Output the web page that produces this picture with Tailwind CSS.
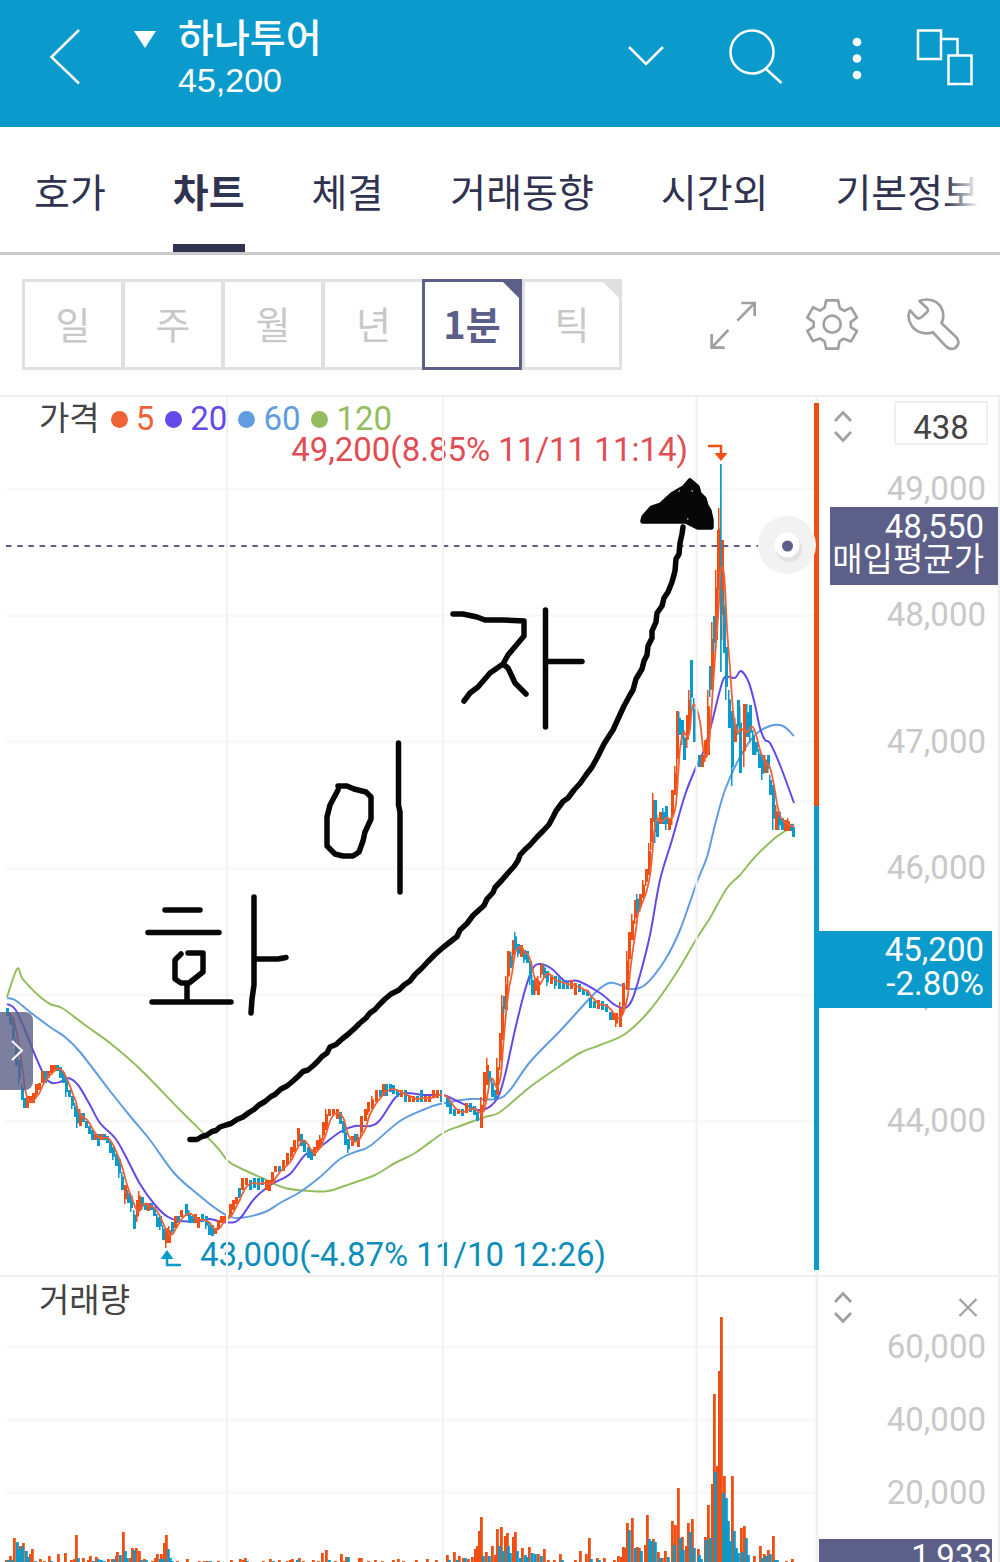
<!DOCTYPE html>
<html lang="ko">
<head>
  <meta charset="UTF-8" />
  <meta name="viewport" content="width=device-width, initial-scale=1.0" />
  <title>하나투어 차트</title>
  <script src="https://cdn.jsdelivr.net/npm/@tailwindcss/browser@4"></script>
</head>
<body class="bg-white font-['Roboto','Noto_Sans_CJK_KR',sans-serif] text-[#444]">

  <!-- 상단 종목 바 -->
  <header class="flex h-[127px] items-start bg-[#0a9acb] pr-[26px] pl-[49px] text-white">
    <button type="button" aria-label="뒤로" class="mt-7">
      <svg class="h-[58px] w-8" viewBox="0 0 32 58" fill="none" stroke="currentColor" stroke-width="2.5"><path d="M30 2 2.500 29 30 55.500" /></svg>
    </button>
    <button type="button" aria-label="종목 목록" class="mt-[30px] ml-[52px]">
      <svg class="h-[18px] w-6" viewBox="0 0 24 18" fill="currentColor"><path d="M1 1h22L12 18z" /></svg>
    </button>
    <div class="mt-[10px] ml-[21px]">
      <h1 class="font-['Noto_Sans_CJK_KR',sans-serif] text-[39px] leading-[50px] font-medium">하나투어</h1>
      <p class="mt-[2px] font-['Liberation_Sans',sans-serif] text-[34px] leading-9">45,200</p>
    </div>
    <div class="mt-7 ml-auto flex items-center">
      <button type="button" aria-label="펼치기">
        <svg class="h-[58px] w-[38px]" viewBox="0 0 38 58" fill="none" stroke="currentColor" stroke-width="2.500"><path d="M2 19l17 17 17-17" /></svg>
      </button>
      <button type="button" aria-label="검색" class="ml-[63px]">
        <svg class="h-[58px] w-[56px]" viewBox="0 0 56 58" fill="none" stroke="currentColor" stroke-width="2.500"><circle cx="24" cy="24" r="21.500" /><path d="M37.500 40.500 53.500 55" /></svg>
      </button>
      <button type="button" aria-label="더보기" class="ml-[67px]">
        <svg class="h-[58px] w-3" viewBox="0 0 12 58" fill="currentColor"><circle cx="6" cy="14" r="4.300" /><circle cx="6" cy="30.500" r="4.300" /><circle cx="6" cy="47" r="4.300" /></svg>
      </button>
      <button type="button" aria-label="화면 연결" class="ml-[53px]">
        <svg class="h-[58px] w-[58px]" viewBox="0 0 58 58" fill="none" stroke="currentColor" stroke-width="2.500"><path d="M2 2.500h23v28.500H2zM25 11h16.500v16.500M32.500 27.500h23v28.500h-23z" /></svg>
      </button>
    </div>
  </header>

  <!-- 탭 메뉴 -->
  <nav class="relative flex h-32 gap-[67px] overflow-hidden border-b-3 border-[#c9c9c9] pl-[34px] font-['Noto_Sans_CJK_KR',sans-serif] text-[39px] leading-[126px] whitespace-nowrap text-[#303350]">
    <a href="#">호가</a>
    <a href="#" aria-current="page" class="border-b-8 border-[#303350] font-bold">차트</a>
    <a href="#">체결</a>
    <a href="#">거래동향</a>
    <a href="#">시간외</a>
    <a href="#">기본정보</a>
    <span class="absolute inset-y-0 right-0 w-[54px] bg-linear-to-r from-white/0 to-white to-60%"></span>
  </nav>

  <!-- 주기 선택, 도구 -->
  <section class="flex h-[140px] items-start pt-6 pr-[39px] pl-[22px]">
    <div class="flex h-[91px] font-['Noto_Sans_CJK_KR',sans-serif] text-[38px] leading-[82px] text-[#c8c8c8]">
      <button type="button" class="-mr-[2px] flex w-[102px] justify-center border-3 border-[#e0e0e0]">일</button>
      <button type="button" class="-mr-[2px] flex w-[102px] justify-center border-3 border-[#e0e0e0]">주</button>
      <button type="button" class="-mr-[2px] flex w-[102px] justify-center border-3 border-[#e0e0e0]">월</button>
      <button type="button" class="flex w-[100px] justify-center border-3 border-r-0 border-[#e0e0e0]">년</button>
      <button type="button" aria-pressed="true" class="relative flex w-[100px] justify-center border-3 border-[#5c5f87] font-bold text-[#5c5f87]">1분
        <svg class="absolute top-0 right-0 size-4" viewBox="0 0 16 16" fill="currentColor"><path d="M0 0h16v16z" /></svg>
      </button>
      <button type="button" class="relative flex w-[100px] justify-center border-3 border-[#e0e0e0]">틱
        <svg class="absolute top-0 right-0 size-4 text-[#e0e0e0]" viewBox="0 0 16 16" fill="currentColor"><path d="M0 0h16v16z" /></svg>
      </button>
    </div>
    <div class="ml-auto flex h-[91px] items-center gap-12 text-[#a0a0a0]">
      <button type="button" aria-label="전체 화면">
        <svg class="h-[50px] w-12" viewBox="628 118 144 150" fill="none" stroke="currentColor" stroke-width="8"><path d="M713 180 765 127M725 127h40v39M686 208l-50 53M636 220v41h39" /></svg>
      </button>
      <button type="button" aria-label="설정">
        <svg class="size-[53px]" viewBox="918 114 160 160" fill="none" stroke="currentColor" stroke-width="8" stroke-linejoin="round"><path d="M982 121h36l5 24 14 8 20-10 18 30-19 14v15l19 12-18 31-22-8-13 8-4 22h-36l-5-22-14-9-21 8-17-31 19-12v-15l-19-13 17-31 21 10 14-9z" /><circle cx="1000" cy="193" r="26" /></svg>
      </button>
      <button type="button" aria-label="도구">
        <svg class="size-[55px]" viewBox="1218 112 164 164" fill="none" stroke="currentColor" stroke-width="8" stroke-linejoin="round"><path d="M1258 124c20-9 50-5 64 18 9 15 9 32 2 48l45 43c9 11 6 26-6 32-9 4-18 1-25-5l-40-43c-23 8-50 1-63-19-11-17-12-32-5-46l18 20q10 8 19-2l14-13q5-7-2-14z" /></svg>
      </button>
    </div>
  </section>

  <!-- 가격 차트 -->
  <section class="grid h-[880px] grid-cols-[minmax(0,1fr)_181px] border-t-2 border-[#efefef] text-[33px]">
    <div class="relative">
      <svg class="h-[880px] w-full" viewBox="0 397 819 880" preserveAspectRatio="none" fill="none">
        <path stroke="#f8f8f8" stroke-width="2.500" d="M6 489H816M6 615.500H816M6 742H816M6 868.500H816M6 995H816M6 1121.500H816" />
        <path stroke="#f1f1f1" stroke-width="3" d="M817 397V1277" />
        <g id="averages" stroke-width="2"></g>
        <g id="candles"></g>
        <path stroke="#5c5f87" stroke-width="2" stroke-dasharray="5.500 5.700" d="M6 546H776" />
        <path stroke="#f04e12" stroke-width="5" d="M816.500 403V806" />
        <path stroke="#0a9acb" stroke-width="5" d="M816.500 806V1270" />
        <circle cx="787" cy="545" r="29" fill="#f2f2f2" />
        <circle cx="789" cy="549" r="13" fill="#e2e2e2" />
        <circle cx="787" cy="545" r="12.500" fill="#fff" />
        <circle cx="787.500" cy="546" r="5.500" fill="#5c5f87" />
        <path stroke="#f04e12" stroke-width="2.500" d="M708 446h13v9" />
        <path fill="#f04e12" d="M714.500 453h13l-6.500 8z" />
        <path stroke="#0a9acb" stroke-width="2.500" d="M167 1258v7h14" />
        <path fill="#0a9acb" d="M160.500 1259h13l-6.500-9z" />
      </svg>
      <div class="absolute top-0 left-[39px] flex items-center leading-11">
        <h2>가격</h2>
        <span class="ml-[11px] size-[17px] rounded-full bg-[#ef6237]"></span><span class="ml-2 text-[#ef6237]">5</span>
        <span class="ml-[11px] size-[17px] rounded-full bg-[#6549e8]"></span><span class="ml-2 text-[#6549e8]">20</span>
        <span class="ml-[11px] size-[17px] rounded-full bg-[#609de0]"></span><span class="ml-2 text-[#609de0]">60</span>
        <span class="ml-[11px] size-[17px] rounded-full bg-[#94bd60]"></span><span class="ml-2 text-[#94bd60]">120</span>
      </div>
      <p class="absolute top-[31px] right-[131px] leading-11 whitespace-nowrap text-[#e14d54]">49,200(8.85% 11/11 11:14)</p>
      <p class="absolute top-[836px] left-[200px] leading-11 whitespace-nowrap text-[#0b8ebb]">43,000(-4.87% 11/10 12:26)</p>

      <!-- 세로 눈금선과 손그림 -->
      <svg class="absolute top-0 left-0 h-[880px] w-full" viewBox="0 397 819 880" preserveAspectRatio="none" fill="none">
        <path stroke="#f1f1f1" stroke-width="2" d="M227 397V1277M443 397V1277M696.500 397V1277" />
        <g stroke="#070707" stroke-width="5.500" stroke-linecap="round" stroke-linejoin="round">
          <path d="M165 910H200M148 932.500H219M181 954l-6 6v19l6 4h8l14-11v-19h-15M187 984v17M152 1002h79M254 897v88l-2 14-1 14M255 959h23l8-1.500" />
          <path d="M338 786h9l7 3 12 3 5 5v22l-6 13-2 9-4 11-6 4h-10l-8-2-8-8v-29l3-12 8-15M398.500 743v62l1.500 7v80" />
          <path d="M453 614h10l14 3 8 3h18l21 1v15l-16 19-5 9-13 9-12 14-8 6-6 8M503 664l5 4 7 15 11 11M545.500 610v117M547 661.500h35" />
          <path d="M190 1139.500 197 1139.500 202 1136.500 206 1135.500 212 1131.500 216 1130.500 220 1127 226 1125 231 1123.500 237 1119.500 243 1117 249 1112.500 254 1109.500 259 1105 265 1101.500 271 1096.500 275 1094.500 281 1089 287 1086 293 1081 298 1076.500 303 1071.500 308 1070 314 1065 318 1061 322 1056.500 327 1053 330 1047 336 1044.500 342 1039 349 1033.500 355 1028 360 1023 366 1018 370 1013 375 1009.500 379 1005 385 999 391 994 399 990 404 985 410 981 415 974.500 422 968 428 961.500 435 954.500 443 947.500 450 942 457 936.500 460 930 467 923.500 473 915.500 479 910 484 905.500 487 899 493 892.500 495 887.500 502 880 508 873 514 866.500 518 860.500 520 855 525 849.500 530 845 537 837 543 831 549 824.500 553 817 556 811 563 801.500 568 798 574 790 580 783.500 586 775 592 767 597 758 604 744 609 736 613 730 618 719 624 706 630 695 633 690 636 679 642 669 644 661 647 655 648 646 652 638 652 631 656 622 657 613 662 606 664 598 668 592 672 582 675 571 676 559 679 554 680 543 682 534 683 527" />
          <path fill="#070707" d="M643 521 644 517 652 508 661 505 672 495 684 488 690 481 697 487 699 494 704 499 706 506 709 511 711 520 711 527H698L686 521z" />
        </g>
        <path stroke="#fff" stroke-width="1" d="M678.500 491.500l1.500-1M691.500 490.500l1.500 1M687 519h1.500" />
      </svg>
      <button type="button" aria-label="메뉴 열기" class="absolute top-[615px] left-0 flex h-[78px] w-[33px] items-center justify-center rounded-r-lg bg-[#5c5f87]/80 text-white">
        <svg class="h-6 w-4" viewBox="0 0 16 24" fill="none" stroke="currentColor" stroke-width="2"><path d="M3 2l10 9.500L3 21" /></svg>
      </button>
    </div>

    <!-- 가격 축 -->
    <div class="relative border-r-2 border-[#efefef]">
      <div class="flex items-start justify-between pt-1 pr-[10px] pl-[14px]">
        <button type="button" aria-label="가격 영역 높이 조절" class="mt-2 text-[#a0a0a0]">
          <svg class="h-9 w-5" viewBox="0 0 20 36" fill="none" stroke="currentColor" stroke-width="2.800"><path d="M2 12l8-8.500 8 8.500M2 23l8 8.500 8-8.500" /></svg>
        </button>
        <input type="text" value="438" aria-label="봉 개수" class="h-11 w-[94px] border-2 border-[#efefef] pt-2 text-center leading-9" />
      </div>
      <div class="absolute inset-x-0 top-7 grid h-[759px] grid-rows-6 items-center pr-3 text-right text-[#c8c8c8]">
        <span>49,000</span>
        <span>48,000</span>
        <span>47,000</span>
        <span>46,000</span>
        <span>45,000</span>
        <span>44,000</span>
      </div>
      <div class="absolute top-[110px] right-0 left-[11px] flex h-[78px] flex-col items-end bg-[#5c5f87] pt-[3px] pr-[14px] leading-[33px] whitespace-nowrap text-white">
        <span>48,550</span>
        <span>매입평균가</span>
      </div>
      <div class="absolute top-[534px] right-[6px] left-0 h-[77px] bg-[#0a9acb] pt-[2px] pr-2 text-right leading-[34px] text-white">
        <p>45,200</p>
        <p>-2.80%</p>
      </div>
    </div>
  </section>

  <!-- 거래량 차트 -->
  <section class="grid h-[287px] grid-cols-[minmax(0,1fr)_181px] overflow-hidden border-t-2 border-[#efefef] text-[33px]">
    <div class="relative">
      <svg class="h-[285px] w-full" viewBox="0 1277 819 285" preserveAspectRatio="none" fill="none">
        <path stroke="#f8f8f8" stroke-width="2.500" d="M6 1347H816M6 1420H816M6 1492.500H816" />
        <path stroke="#f1f1f1" stroke-width="2" d="M227 1277V1562M443 1277V1562M696.500 1277V1562" />
        <path stroke="#f1f1f1" stroke-width="3" d="M817 1277V1562" />
        <g id="volumes"></g>
      </svg>
      <h2 class="absolute top-[2px] left-[39px] leading-11">거래량</h2>
    </div>
    <div class="relative h-[285px] overflow-hidden border-r-2 border-[#efefef]">
      <div class="flex items-start justify-between pt-3 pr-5 pl-[14px] text-[#a0a0a0]">
        <button type="button" aria-label="거래량 영역 높이 조절">
          <svg class="h-9 w-5" viewBox="0 0 20 36" fill="none" stroke="currentColor" stroke-width="2.800"><path d="M2 13l8-8.500 8 8.500M2 24l8 8.500 8-8.500" /></svg>
        </button>
        <button type="button" aria-label="거래량 닫기" class="mt-2">
          <svg class="size-5" viewBox="0 0 20 20" fill="none" stroke="currentColor" stroke-width="2.200"><path d="M1.500 2l17 17M18.500 2l-17 17" /></svg>
        </button>
      </div>
      <div class="absolute inset-x-0 top-[33px] grid h-[219px] grid-rows-3 items-center pr-3 text-right text-[#c8c8c8]">
        <span>60,000</span>
        <span>40,000</span>
        <span>20,000</span>
      </div>
      <p class="absolute top-[262px] right-[6px] left-0 h-10 bg-[#5c5f87] text-right leading-9 text-white">1,933</p>
    </div>
  </section>

  <script>
    const NS = 'http://www.w3.org/2000/svg';
    const COLORS = { r: '#f04e12', b: '#0a9acb' };

    // x 고가 저가 색
    const candles = `7 1008 1016 b,10 1012 1025 b,13 1018 1045 b,16 1038 1066 b,19 1060 1085 b,22 1084 1100 b,24 1098 1108 b,27 1096 1108 r,30 1096 1103 r,33 1093 1103 r,36 1084 1098 r,39 1083 1090 r,42 1071 1083 r,45 1071 1083 b,48 1071 1078 r,51 1065 1073 r,54 1065 1071 r,57 1065 1071 b,60 1067 1078 b,63 1072 1083 b,66 1078 1097 b,69 1090 1097 b,72 1096 1109 b,75 1103 1117 b,77 1109 1128 b,80 1109 1126 r,83 1113 1122 b,86 1121 1128 b,89 1126 1134 b,92 1130 1140 b,95 1134 1140 r,98 1134 1146 b,101 1134 1140 r,104 1134 1140 b,107 1136 1143 b,110 1141 1153 b,113 1147 1160 b,116 1154 1166 b,119 1159 1178 b,122 1172 1190 b,125 1185 1204 r,128 1190 1203 b,131 1196 1212 b,134 1210 1229 b,137 1200 1222 r,139 1191 1210 r,142 1197 1210 b,145 1203 1210 b,148 1203 1211 r,151 1203 1210 b,154 1207 1216 b,157 1214 1227 b,160 1216 1230 b,163 1225 1240 b,166 1228 1248 r,169 1226 1243 r,172 1222 1235 b,175 1216 1228 r,178 1216 1223 b,181 1210 1217 r,186 1204 1216 b,189 1210 1223 b,192 1216 1223 b,195 1214 1223 r,198 1217 1228 r,202 1214 1222 b,206 1216 1229 b,209 1222 1235 b,212 1225 1236 b,215 1228 1234 r,218 1220 1229 r,221 1216 1223 r,224 1216 1222 r,230 1204 1216 r,233 1200 1210 r,236 1197 1204 r,239 1188 1198 b,242 1178 1190 r,246 1178 1185 r,250 1180 1190 b,254 1178 1188 b,258 1178 1190 b,262 1178 1185 b,266 1180 1190 r,269 1180 1191 r,272 1172 1184 r,275 1166 1172 r,279 1166 1172 b,283 1160 1171 r,287 1153 1165 r,291 1147 1160 r,294 1140 1152 r,298 1128 1146 r,301 1134 1146 b,304 1140 1152 b,308 1147 1158 b,311 1150 1160 b,314 1147 1156 r,317 1140 1150 r,320 1135 1148 r,323 1122 1140 r,326 1109 1130 r,329 1109 1116 r,333 1109 1115 r,337 1109 1119 r,340 1112 1124 b,343 1121 1133 b,345 1128 1145 b,348 1139 1153 b,352 1136 1146 r,355 1134 1142 b,358 1134 1147 r,361 1116 1138 r,365 1109 1121 r,368 1102 1115 r,372 1096 1109 r,376 1090 1102 r,380 1090 1097 b,383 1084 1096 r,386 1084 1096 b,390 1084 1092 b,393 1085 1094 b,397 1090 1097 b,401 1090 1097 r,405 1090 1102 b,409 1096 1102 r,413 1096 1102 r,417 1096 1102 b,421 1090 1102 b,425 1096 1102 r,429 1096 1102 r,433 1090 1098 r,437 1090 1098 r,441 1090 1102 b,447 1097 1107 b,450 1103 1114 b,454 1109 1116 b,458 1109 1114 r,462 1109 1116 b,466 1103 1113 r,470 1103 1112 b,474 1106 1115 b,477 1112 1121 b,481 1097 1128 r,484 1072 1112 r,487 1058 1085 r,489 1071 1085 b,492 1078 1097 b,495 1090 1100 b,497 1058 1095 r,500 1033 1070 r,502 995 1040 r,504 996 1013 b,506 976 1010 r,508 951 985 r,511 952 968 b,513 940 960 r,515 932 950 b,518 944 957 b,521 945 957 r,524 950 963 b,527 951 963 b,530 961 985 b,532 975 995 b,535 978 995 r,538 976 995 r,541 964 978 r,544 964 978 b,547 971 986 b,551 975 984 r,555 976 989 b,559 976 989 b,563 980 989 b,567 982 989 b,571 980 989 r,575 983 995 r,579 984 992 b,583 989 995 b,587 990 996 b,590 998 1008 b,594 1001 1008 b,598 1000 1009 r,602 1001 1010 b,606 1004 1012 b,610 1012 1020 b,613 1013 1020 r,616 1013 1027 r,620 1002 1027 r,623 983 1014 r,627 951 990 r,629 932 968 r,632 914 940 r,635 900 924 r,637 894 913 b,640 894 912 r,643 880 898 r,646 869 886 r,649 843 875 r,651 818 850 r,653 793 822 r,655 800 843 b,657 815 837 b,660 812 824 r,663 808 824 b,666 806 830 b,669 818 830 r,672 790 825 r,675 766 795 r,677 711 775 r,679 712 735 b,682 720 745 b,684 730 760 b,687 715 748 r,689 690 730 r,691 660 710 b,694 698 742 b,699 755 767 b,702 755 767 r,705 740 762 r,708 690 755 r,710 666 697 b,712 622 690 r,714 616 652 b,716 570 640 r,718 530 600 r,719 508 590 r,722 540 640 r,724 590 653 b,726 647 700 b,729 690 728 b,732 711 786 b,735 718 742 r,738 700 735 b,740 706 773 b,744 704 767 r,747 704 737 b,750 705 742 b,753 730 755 b,756 742 755 b,759 749 768 b,762 755 780 b,765 755 773 r,768 755 773 b,770 775 795 b,773 785 830 b,776 805 830 r,779 812 830 b,782 818 830 b,785 820 831 r,788 818 831 r,791 824 831 b,793 824 837 b`;

    const averages = [
      ['#94bd60', '7 997 17 969 22 978 30 987 38 995 50 1004 62 1008 85 1025 110 1043 140 1069 180 1110 215 1145 228 1161 240 1168 262 1178 285 1188 310 1191 328 1191 350 1184 375 1175 395 1163 415 1153 443 1133 460 1126 485 1117 500 1112 530 1087 560 1066 580 1053 600 1045 625 1034 650 1010 675 975 697 938 710 918 727 888 740 875 755 857 775 838 785 831 794 824'],
      ['#609de0', '7 998 15 1000 30 1012 50 1027 65 1037 80 1052 110 1091 130 1116 150 1140 175 1174 200 1196 215 1208 228 1216 240 1218 265 1212 280 1203 300 1192 320 1177 340 1159 355 1152 370 1146 400 1121 425 1109 440 1104 470 1099 497 1099 510 1090 530 1062 560 1031 580 1009 597 991 609 983 620 985 630 989 645 985 665 960 680 930 697 882 707 857 715 825 725 790 740 757 755 735 770 726 783 726 794 736'],
      ['#6549e8', '7 1004 15 1009 25 1030 35 1055 45 1077 52 1083 60 1082 68 1078 78 1085 90 1105 100 1123 115 1138 125 1155 140 1184 155 1205 168 1217 180 1221 200 1221 210 1219 222 1222 235 1222 242 1216 255 1198 272 1184 290 1174 305 1155 320 1147 340 1132 355 1126 370 1126 380 1120 395 1098 405 1093 425 1095 443 1095 455 1100 470 1107 483 1110 497 1099 505 1075 515 1030 525 990 533 968 541 964 552 969 565 981 578 981 600 993 615 1005 625 1008 632 1000 640 975 650 935 660 880 672 840 685 795 697 765 704 750 712 722 720 690 725 677 735 678 741 671 749 683 755 705 760 728 765 740 770 743 780 765 794 803']
    ];

    // x 높이 색
    const volumes = `6 2 r,8 2 b,10 6 r,12 2 b,14 24 r,17 20 b,19 13 b,20 16 r,23 19 r,22 16 b,26 11 b,28 5 b,30 8 r,32 13 r,35 1 b,40 3 r,44 1 r,49 6 r,51 1 b,58 8 r,65 9 r,71 2 r,74 3 r,76 27 r,78 4 b,83 4 r,88 2 r,90 6 r,93 1 b,96 5 r,98 3 b,101 2 b,104 1 b,108 3 r,112 3 r,114 3 b,116 6 r,117 10 r,120 7 b,123 30 r,125 11 b,127 4 b,130 4 r,132 14 r,136 14 r,134 12 b,139 11 r,141 2 b,144 3 r,146 2 b,152 1 r,155 4 r,157 8 r,160 3 b,161 8 r,163 3 b,164 19 r,166 27 r,168 13 b,170 4 b,172 1 b,177 1 r,187 3 r,199 1 r,204 1 r,207 1 r,210 1 b,218 1 r,231 2 r,240 3 r,243 2 r,245 4 r,247 1 b,263 1 r,270 3 r,273 1 b,279 2 r,287 1 r,290 2 r,292 3 r,297 2 b,299 4 r,303 1 r,313 2 r,318 1 r,322 9 r,326 12 r,329 2 b,335 1 r,341 8 r,344 1 r,346 5 r,348 5 b,359 4 r,361 4 r,368 1 r,375 2 r,382 1 r,393 2 r,398 3 r,403 1 r,416 2 r,427 3 r,436 2 r,447 7 r,449 2 b,454 10 r,457 2 b,459 6 r,463 4 r,465 4 b,468 3 r,472 5 r,475 13 r,477 16 r,479 31 r,481 45 r,483 6 b,486 10 r,489 6 b,492 16 r,495 7 r,497 33 r,499 16 b,501 35 r,503 11 b,505 26 r,507 29 r,508 16 b,510 9 b,513 25 r,515 30 r,517 11 b,520 4 b,522 14 r,525 7 b,527 5 b,529 15 r,532 9 b,535 8 b,538 8 r,541 6 b,544 13 r,548 2 r,554 2 r,560 8 r,562 2 b,575 2 r,580 11 r,586 8 r,589 24 r,591 3 b,597 4 r,599 2 b,604 4 r,614 2 r,618 6 r,621 5 r,623 15 r,625 14 r,627 39 r,629 32 b,632 44 r,635 14 b,637 15 r,639 14 r,641 11 b,645 17 r,647 47 r,649 23 b,651 21 b,653 23 r,655 20 b,658 10 r,660 4 b,662 4 r,665 11 r,668 5 b,672 41 r,674 17 b,675 37 r,678 74 r,680 24 b,682 25 r,683 12 b,686 16 r,688 39 r,690 30 b,692 43 r,694 14 b,698 13 r,699 7 b,701 3 b,705 25 r,706 22 b,708 57 r,710 24 b,712 78 r,714 168 r,717 96 r,715 90 b,719 191 r,721 245 r,724 86 r,723 69 b,726 64 b,728 41 b,730 21 b,732 86 r,734 31 b,736 14 b,738 9 b,741 34 r,742 10 b,744 36 r,746 24 b,748 7 b,754 6 r,760 16 r,762 4 b,764 8 r,766 6 b,768 12 r,770 8 b,773 26 r,775 2 b,777 2 b,786 1 r,792 3 r`;

    function add(parent, name, attrs) {
      const el = document.createElementNS(NS, name);
      Object.keys(attrs).forEach(key => el.setAttribute(key, attrs[key]));
      parent.appendChild(el);
    }

    // 점들을 부드러운 곡선으로 연결
    function smooth(points) {
      let d = `M${points[0]}`;
      for (let i = 0; i < points.length - 1; i++) {
        const p0 = points[i - 1] || points[i];
        const p1 = points[i];
        const p2 = points[i + 1];
        const p3 = points[i + 2] || p2;
        d += `C${p1[0] + (p2[0] - p0[0]) / 6} ${p1[1] + (p2[1] - p0[1]) / 6} ${p2[0] - (p3[0] - p1[0]) / 6} ${p2[1] - (p3[1] - p1[1]) / 6} ${p2}`;
      }
      return d;
    }

    const rows = text => text.split(',').map(row => row.split(' ').map((v, i, all) => i === all.length - 1 ? v : Number(v)));

    // 이동평균선
    const averageLayer = document.getElementById('averages');
    averages.forEach(([color, text]) => {
      const n = text.split(' ').map(Number);
      const points = [];
      for (let i = 0; i < n.length; i += 2) points.push([n[i], n[i + 1]]);
      add(averageLayer, 'path', { d: smooth(points), stroke: color });
    });

    // 캔들
    const candleLayer = document.getElementById('candles');
    const bars = rows(candles);
    bars.forEach(([x, top, bottom, c], i) => {
      const height = bottom - top;
      const wick = height > 12 ? height * 0.25 : 0;
      add(candleLayer, 'rect', { x: x - 1, y: top, width: 1.5, height: height, fill: COLORS[c] });
      add(candleLayer, 'rect', { x: x - 1, y: top + (i % 2 ? wick : 0), width: 3, height: height - wick, fill: COLORS[c] });
    });
    add(candleLayer, 'rect', { x: 720, y: 464, width: 1.7, height: 208, fill: COLORS.b });

    // 5 이동평균
    const five = bars.map((bar, i) => {
      const part = bars.slice(Math.max(0, i - 2), i + 1);
      return [bar[0] + 1, part.reduce((sum, p) => sum + (p[1] + p[2]) / 2, 0) / part.length];
    });
    add(candleLayer, 'path', { d: smooth(five), stroke: '#ef6237', 'stroke-width': 1.8 });

    // 거래량: 하락 봉을 위에 그린다
    const volumeLayer = document.getElementById('volumes');
    const volumeBars = rows(volumes);
    ['r', 'b'].forEach(color => {
      volumeBars.filter(bar => bar[2] === color).forEach(([x, h]) => {
        add(volumeLayer, 'rect', { x: x - 1, y: 1562 - h, width: 2.8, height: h, fill: COLORS[color] });
      });
    });
  </script>

</body>
</html>
